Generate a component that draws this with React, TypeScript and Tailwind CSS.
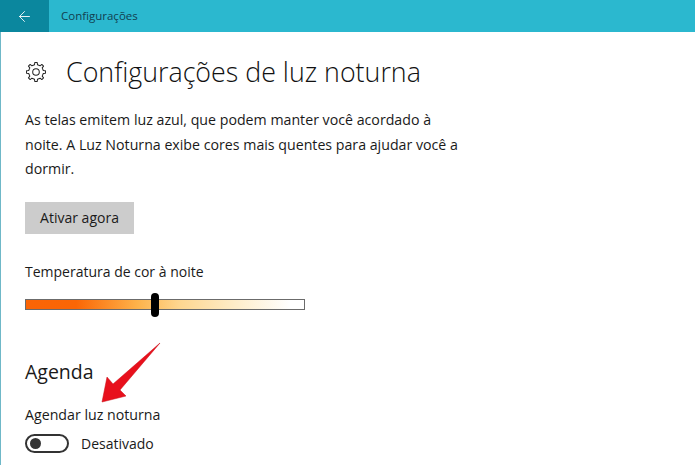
import { ArrowLeft } from "lucide-react";

// outline of an eight-toothed gear, centred on 12,12
const gearPath = (() => {
  const teeth = 8;
  const points: string[] = [];
  for (let i = 0; i < teeth; i++) {
    const a = (i * 2 * Math.PI) / teeth;
    const step = [
      [-0.2, 8.1],
      [-0.13, 10.4],
      [0.13, 10.4],
      [0.2, 8.1],
    ];
    for (const [da, r] of step) {
      const x = 12 + r * Math.sin(a + da);
      const y = 12 - r * Math.cos(a + da);
      points.push(`${x.toFixed(2)} ${y.toFixed(2)}`);
    }
  }
  return `M${points.join("L")}Z`;
})();

export default function App() {
  return (
    <div className="relative flex h-[465px] w-[695px] flex-col overflow-hidden bg-white text-[#1a1a1a] [font-family:'Open_Sans','Noto_Sans',sans-serif]">
      <header className="flex h-8 shrink-0 items-center bg-[#2bb8cf]">
        <div className="flex h-8 w-[49px] items-center justify-center bg-[#0b879e] text-white">
          <ArrowLeft size={17} strokeWidth={1.25} />
        </div>
        <span className="ml-3 text-[11.5px] text-[#12404f]">Configurações</span>
      </header>

      <main className="flex-1 border-l border-[#6fb8c8] pl-6">
        <div className="mt-5 flex h-10 items-center">
          <svg width="22" height="22" viewBox="0 0 24 24" fill="none" stroke="#222" strokeWidth="1.1" strokeLinejoin="round">
            <path d={gearPath} />
            <circle cx="12" cy="12" r="3.6" />
          </svg>
          <h1 className="ml-[19px] text-[26.8px] font-light leading-10 text-[#111]">Configurações de luz noturna</h1>
        </div>

        <p className="mt-4 w-[445px] text-[14.2px] leading-[24.5px]">
          As telas emitem luz azul, que podem manter você acordado à noite. A Luz Noturna exibe cores mais quentes para ajudar você a dormir.
        </p>

        <button className="mt-5 flex h-8 w-[109px] items-center justify-center bg-[#cccccc] text-[14px]">Ativar agora</button>

        <div className="mt-7 text-[14px] leading-5">Temperatura de cor à noite</div>

        <div className="relative mt-[17px] h-[11px] w-[280px] border border-[#6b6b6b] bg-[linear-gradient(90deg,#fb6405_0%,#fb6605_18%,#fdb24a_40%,#fed68f_55%,#feecc8_75%,#ffffff_95%)]">
          <div className="absolute left-[125px] top-[-7px] h-6 w-2 rounded-full bg-black" />
        </div>

        <h2 className="mt-12 text-[19.5px] leading-7">Agenda</h2>
        <div className="mt-[19px] text-[14.2px] leading-5">Agendar luz noturna</div>
        <div className="mt-[9px] flex items-center">
          <div className="flex h-[19px] w-[44px] items-center rounded-full border-2 border-[#333] pl-[3px]">
            <div className="h-[11px] w-[11px] rounded-full bg-[#333]" />
          </div>
          <span className="ml-3 text-[14px] leading-5">Desativado</span>
        </div>
      </main>

      <svg className="absolute left-[100px] top-[340px]" width="64" height="66" viewBox="0 0 64 66">
        <path d="M60 3 L20 50 L26 56 L2 62 L7 37 L13 44 Z" fill="#e8101c" stroke="#c90d16" strokeWidth="0.5" strokeLinejoin="round" />
      </svg>
    </div>
  );
}
